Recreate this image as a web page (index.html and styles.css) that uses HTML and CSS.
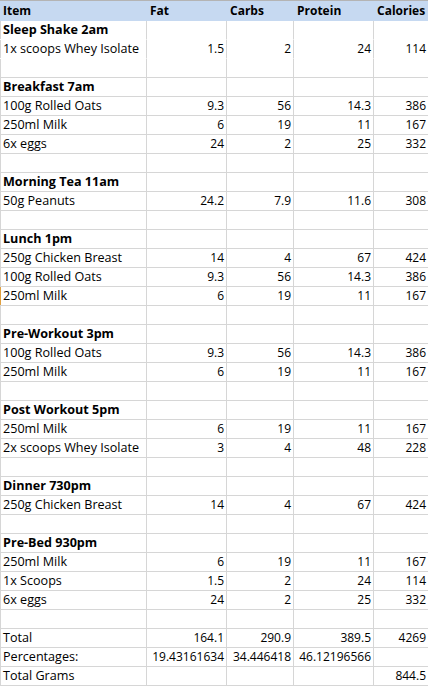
FILE: index.html
```html
<!DOCTYPE html>
<html>
<head>
<meta charset="utf-8">
<link rel="stylesheet" href="styles.css">
</head>
<body>
<div class="sheet">
  <div class="row head">
    <div class="c">Item</div><div class="c">Fat</div><div class="c">Carbs</div><div class="c">Protein</div><div class="c">Calories</div>
  </div>
  <div class="row nob"><div class="c b">Sleep Shake 2am</div><div class="c"></div><div class="c"></div><div class="c"></div><div class="c"></div></div>
  <div class="row nob"><div class="c">1x scoops Whey Isolate</div><div class="c n">1.5</div><div class="c n">2</div><div class="c n">24</div><div class="c n">114</div></div>
  <div class="row"><div class="c"></div><div class="c"></div><div class="c"></div><div class="c"></div><div class="c"></div></div>

  <div class="row"><div class="c b">Breakfast 7am</div><div class="c"></div><div class="c"></div><div class="c"></div><div class="c"></div></div>
  <div class="row"><div class="c">100g Rolled Oats</div><div class="c n">9.3</div><div class="c n">56</div><div class="c n">14.3</div><div class="c n">386</div></div>
  <div class="row"><div class="c">250ml Milk</div><div class="c n">6</div><div class="c n">19</div><div class="c n">11</div><div class="c n">167</div></div>
  <div class="row"><div class="c">6x eggs</div><div class="c n">24</div><div class="c n">2</div><div class="c n">25</div><div class="c n">332</div></div>
  <div class="row"><div class="c"></div><div class="c"></div><div class="c"></div><div class="c"></div><div class="c"></div></div>

  <div class="row"><div class="c b">Morning Tea 11am</div><div class="c"></div><div class="c"></div><div class="c"></div><div class="c"></div></div>
  <div class="row"><div class="c">50g Peanuts</div><div class="c n">24.2</div><div class="c n">7.9</div><div class="c n">11.6</div><div class="c n">308</div></div>
  <div class="row"><div class="c"></div><div class="c"></div><div class="c"></div><div class="c"></div><div class="c"></div></div>

  <div class="row"><div class="c b">Lunch 1pm</div><div class="c"></div><div class="c"></div><div class="c"></div><div class="c"></div></div>
  <div class="row"><div class="c">250g Chicken Breast</div><div class="c n">14</div><div class="c n">4</div><div class="c n">67</div><div class="c n">424</div></div>
  <div class="row"><div class="c">100g Rolled Oats</div><div class="c n">9.3</div><div class="c n">56</div><div class="c n">14.3</div><div class="c n">386</div></div>
  <div class="row"><div class="c mark">250ml Milk</div><div class="c n">6</div><div class="c n">19</div><div class="c n">11</div><div class="c n">167</div></div>
  <div class="row"><div class="c"></div><div class="c"></div><div class="c"></div><div class="c"></div><div class="c"></div></div>

  <div class="row"><div class="c b">Pre-Workout 3pm</div><div class="c"></div><div class="c"></div><div class="c"></div><div class="c"></div></div>
  <div class="row"><div class="c">100g Rolled Oats</div><div class="c n">9.3</div><div class="c n">56</div><div class="c n">14.3</div><div class="c n">386</div></div>
  <div class="row"><div class="c">250ml Milk</div><div class="c n">6</div><div class="c n">19</div><div class="c n">11</div><div class="c n">167</div></div>
  <div class="row"><div class="c"></div><div class="c"></div><div class="c"></div><div class="c"></div><div class="c"></div></div>

  <div class="row"><div class="c b">Post Workout 5pm</div><div class="c"></div><div class="c"></div><div class="c"></div><div class="c"></div></div>
  <div class="row"><div class="c">250ml Milk</div><div class="c n">6</div><div class="c n">19</div><div class="c n">11</div><div class="c n">167</div></div>
  <div class="row"><div class="c">2x scoops Whey Isolate</div><div class="c n">3</div><div class="c n">4</div><div class="c n">48</div><div class="c n">228</div></div>
  <div class="row"><div class="c"></div><div class="c"></div><div class="c"></div><div class="c"></div><div class="c"></div></div>

  <div class="row"><div class="c b">Dinner 730pm</div><div class="c"></div><div class="c"></div><div class="c"></div><div class="c"></div></div>
  <div class="row"><div class="c">250g Chicken Breast</div><div class="c n">14</div><div class="c n">4</div><div class="c n">67</div><div class="c n">424</div></div>
  <div class="row"><div class="c"></div><div class="c"></div><div class="c"></div><div class="c"></div><div class="c"></div></div>

  <div class="row"><div class="c b">Pre-Bed 930pm</div><div class="c"></div><div class="c"></div><div class="c"></div><div class="c"></div></div>
  <div class="row"><div class="c">250ml Milk</div><div class="c n">6</div><div class="c n">19</div><div class="c n">11</div><div class="c n">167</div></div>
  <div class="row"><div class="c">1x Scoops</div><div class="c n">1.5</div><div class="c n">2</div><div class="c n">24</div><div class="c n">114</div></div>
  <div class="row"><div class="c">6x eggs</div><div class="c n">24</div><div class="c n">2</div><div class="c n">25</div><div class="c n">332</div></div>
  <div class="row"><div class="c"></div><div class="c"></div><div class="c"></div><div class="c"></div><div class="c"></div></div>

  <div class="row"><div class="c">Total</div><div class="c n">164.1</div><div class="c n">290.9</div><div class="c n">389.5</div><div class="c n">4269</div></div>
  <div class="row"><div class="c">Percentages:</div><div class="c n">19.43161634</div><div class="c n">34.446418</div><div class="c n">46.12196566</div><div class="c"></div></div>
  <div class="row"><div class="c">Total Grams</div><div class="c"></div><div class="c"></div><div class="c"></div><div class="c n">844.5</div></div>
</div>
</body>
</html>
```

FILE: styles.css
```css
html, body {
  margin: 0;
  padding: 0;
  background: #ffffff;
}

.sheet {
  width: 428px;
  font-family: "Open Sans", "Liberation Sans", sans-serif;
  font-size: 12px;
  color: #000000;
}

.row {
  display: grid;
  grid-template-columns: 147px 80px 67px 80px 54px;
  height: 19px;
}

.c {
  box-sizing: border-box;
  border-right: 1px solid #d6d6d6;
  border-bottom: 1px solid #d6d6d6;
  padding: 0 2px 0 3px;
  line-height: 18px;
  white-space: nowrap;
  overflow: hidden;
}

.c:first-child {
  box-shadow: inset 1px 0 0 #d6d6d6;
  font-size: 12.6px;
}

.c:last-child {
  border-right: none;
}

.c.n {
  text-align: right;
}

.c.b {
  font-weight: bold;
}

.c.mark {
  box-shadow: inset 1px 0 0 #e0a040;
}

.row.nob .c {
  border-bottom-color: #ffffff;
}

.row.head {
  height: 21px;
  border-top: 1px solid #b4b4b4;
  box-sizing: border-box;
  background: #c6d9f1;
  font-weight: bold;
}

.row.head .c {
  border: none;
  box-shadow: none;
  line-height: 20px;
  font-size: 12px;
}
```
